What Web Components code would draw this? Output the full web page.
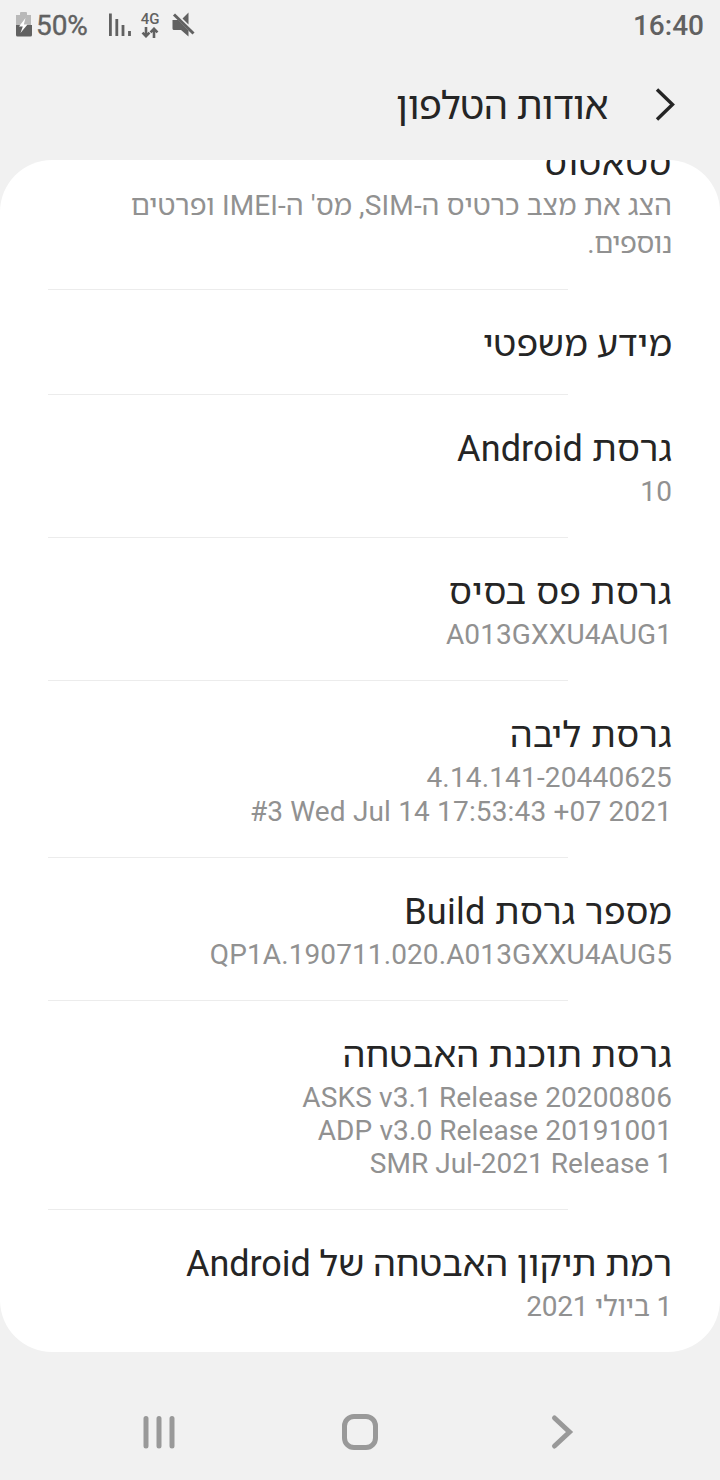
<!DOCTYPE html>
<html lang="he">
<head>
<meta charset="utf-8">
<title>אודות הטלפון</title>
<style>
html, body {
    margin: 0;
    height: 1480px;
    overflow: hidden;
    background: #f1f1f1;
    font-family: Roboto, "Noto Sans Hebrew", "Open Sans", "Noto Sans", sans-serif;
}
</style>
</head>
<body>
<phone-screen>
    <status-bar slot="top" battery="50%" network="4G" time="16:40"></status-bar>
    <page-header slot="top">אודות הטלפון</page-header>
    <settings-card>
        <settings-item class="first" tall heading="סטאטוס" style="--track:.5px">
            <summary-line style="--sub-track:.15px">הצג את מצב כרטיס ה-SIM, מס' ה-IMEI ופרטים</summary-line>
            <summary-line style="--sub-track:-.35px">נוספים.</summary-line>
        </settings-item>
        <settings-item heading="מידע משפטי"></settings-item>
        <settings-item heading="גרסת Android" style="--track:.1px">
            <summary-line>10</summary-line>
        </settings-item>
        <settings-item heading="גרסת פס בסיס" style="--track:.42px">
            <summary-line ltr>A013GXXU4AUG1</summary-line>
        </settings-item>
        <settings-item heading="גרסת ליבה" style="--track:.35px;--line:34px;--end:28px">
            <summary-line ltr style="--sub-track:.16px">4.14.141-20440625</summary-line>
            <summary-line ltr style="--sub-track:.16px">#3 Wed Jul 14 17:53:43 +07 2021</summary-line>
        </settings-item>
        <settings-item heading="מספר גרסת Build" style="--track:.27px">
            <summary-line ltr style="--sub-track:.1px">QP1A.190711.020.A013GXXU4AUG5</summary-line>
        </settings-item>
        <settings-item heading="גרסת תוכנת האבטחה" style="--track:.25px">
            <summary-line ltr>ASKS v3.1 Release 20200806</summary-line>
            <summary-line ltr style="--sub-track:.1px">ADP v3.0 Release 20191001</summary-line>
            <summary-line ltr style="--sub-track:.03px">SMR Jul-2021 Release 1</summary-line>
        </settings-item>
        <settings-item heading="רמת תיקון האבטחה של Android" style="--track:-.08px">
            <summary-line style="--sub-track:-.2px">1 ביולי 2021</summary-line>
        </settings-item>
    </settings-card>
    <nav-bar slot="bottom"></nav-bar>
</phone-screen>

<script>
class PhoneScreen extends HTMLElement {
    constructor() {
        super();
        this.attachShadow({mode: "open"}).innerHTML = `
<style>
:host{
    display: grid;
    grid-template-rows: 160px 1192px 128px;
    width: 720px;
    height: 1480px;
}
.top{
    display: flex;
    flex-direction: column;
}
</style>
<div class="top"><slot name="top"></slot></div>
<slot></slot>
<slot name="bottom"></slot>`;
    }
}

class StatusBar extends HTMLElement {
    constructor() {
        super();
        this.attachShadow({mode: "open"}).innerHTML = `
<style>
:host{
    display: flex;
    align-items: center;
    box-sizing: border-box;
    height: 50px;
    padding: 0 16px 0 15px;
    color: #616161;
    font-size: 28px;
    font-weight: 500;
    line-height: 48px;
}
svg{
    display: block;
}
.battery-icon{
    margin-right: 4px;
}
.battery, .time{
    padding-top: 2px;
}
.battery{
    width: 52px;
    font-weight: 400;
    letter-spacing: -.1px;
    -webkit-text-stroke: .4px #616161;
}
.signal{
    margin: 0 9px 0 20px;
}
.network{
    display: flex;
    flex-direction: column;
    align-items: center;
    gap: 1px;
    width: 20px;
    margin-right: 11px;
    font-size: 15px;
    line-height: 13px;
}
.time{
    margin-left: auto;
}
</style>
<svg class="battery-icon" width="17" height="26" viewBox="0 0 17 26">
    <path d="M1 3h4V1q0-1 1-1h5q1 0 1 1v2h4v12H1z" fill="#b9b9b9"/>
    <path d="M1 13h16v10q0 1.500-1.500 1.500h-13Q1 24.500 1 23z" fill="#616161"/>
    <path d="M10.500 6L4 14.500h3.800L5.500 21l7-8.500H8.800z" fill="#fff"/>
</svg>
<span class="battery"></span>
<svg class="signal" width="23" height="24" viewBox="0 0 23 24" stroke="#616161" stroke-width="2.800">
    <path d="M2.400 .5v22.500M8.800 6v17M15 12v11M21.500 18v5"/>
</svg>
<span class="network"><span class="type"></span>
<svg width="18" height="11" viewBox="0 0 18 11" fill="none" stroke="#616161" stroke-width="2.600">
    <path d="M5 0v9M1.500 5.700L5 9.200l3.500-3.500M13 11V2M9.500 5.300L13 1.800l3.500 3.500"/>
</svg></span>
<svg width="24" height="26" viewBox="0 0 24 26">
    <path d="M1.500 8h5.500l10.500 10.500V24.500l-7.500-6.500H3q-1.500 0-1.500-1.500zM11.500 6.500l6-6v12z" fill="#616161"/>
    <path d="M3 2.500l19.500 19" stroke="#616161" stroke-width="3"/>
</svg>
<span class="time"></span>`;
        this.shadowRoot.querySelector(".battery").textContent = this.getAttribute("battery");
        this.shadowRoot.querySelector(".type").textContent = this.getAttribute("network");
        this.shadowRoot.querySelector(".time").textContent = this.getAttribute("time");
    }
}

class PageHeader extends HTMLElement {
    constructor() {
        super();
        this.attachShadow({mode: "open"}).innerHTML = `
<style>
:host{
    display: flex;
    direction: rtl;
    align-items: center;
    gap: 47px;
    height: 110px;
    padding-right: 43px;
    color: #252525;
    font-size: 38px;
    letter-spacing: -.4px;
}
svg{
    display: block;
}
span{
    padding-bottom: 2px;
}
</style>
<svg width="22" height="34" viewBox="0 0 22 34" fill="none" stroke="#252525" stroke-width="3.400"><path d="M2 1.500L17.500 16.500 2 31.500"/></svg>
<span><slot></slot></span>`;
    }
}

class SettingsCard extends HTMLElement {
    constructor() {
        super();
        this.attachShadow({mode: "open"}).innerHTML = `
<style>
:host{
    display: flex;
    flex-direction: column;
    direction: rtl;
    overflow: hidden;
    border-radius: 52px;
    background: #fff;
}
/* the list is scrolled, its first row starts above the card */
::slotted(.first){
    margin-top: -51px;
}
</style>
<slot></slot>`;
    }
}

class SettingsItem extends HTMLElement {
    constructor() {
        super();
        this.attachShadow({mode: "open"}).innerHTML = `
<style>
:host{
    display: block;
    flex: none;
    padding: 33px 48px 0;
    color: #252525;
}
:host([tall]){
    --line: 38px;
    --gap: 3px;
    --end: 26px;
}
.heading{
    font-size: 36px;
    line-height: 42px;
    letter-spacing: var(--track, 0);
    white-space: nowrap;
}
.summary{
    margin-top: var(--gap, 5px);
    line-height: var(--line, 33px);
}
.summary.empty{
    margin: 0;
}
.divider{
    height: 1px;
    margin-top: var(--end, 29px);
    margin-right: 104px;
    background: #ececec;
}
:host(:last-child) .divider{
    background: none;
}
</style>
<div class="heading"></div>
<div class="summary"><slot></slot></div>
<div class="divider"></div>`;
        this.shadowRoot.querySelector(".heading").textContent = this.getAttribute("heading");
        if (!this.children.length) this.shadowRoot.querySelector(".summary").classList.add("empty");
    }
}

class SummaryLine extends HTMLElement {
    constructor() {
        super();
        this.attachShadow({mode: "open"}).innerHTML = `
<style>
:host{
    display: block;
    height: var(--line, 33px);
    color: #919191;
    font-size: 28px;
    letter-spacing: var(--sub-track, .12px);
    white-space: nowrap;
}
:host([ltr]){
    direction: ltr;
    text-align: right;
}
</style>
<slot></slot>`;
    }
}

class NavBar extends HTMLElement {
    constructor() {
        super();
        this.attachShadow({mode: "open"}).innerHTML = `
<style>
:host{
    display: grid;
    grid-template-columns: repeat(3, 201px);
    justify-content: center;
    justify-items: center;
    align-items: center;
    padding-top: 32px;
    height: 96px;
}
svg{
    display: block;
    fill: none;
    stroke: #999;
    stroke-width: 5;
    stroke-linecap: round;
}
</style>
<svg width="40" height="40" viewBox="0 0 40 40"><path d="M7 6.500v27.500M20 6.500v27.500M33 6.500v27.500"/></svg>
<svg width="40" height="40" viewBox="0 0 40 40"><rect x="4.500" y="4.500" width="31" height="31" rx="9.500"/></svg>
<svg width="40" height="40" viewBox="0 0 40 40"><path d="M13.500 6l15 14-15 14"/></svg>`;
    }
}

customElements.define("phone-screen", PhoneScreen);
customElements.define("status-bar", StatusBar);
customElements.define("page-header", PageHeader);
customElements.define("settings-card", SettingsCard);
customElements.define("settings-item", SettingsItem);
customElements.define("summary-line", SummaryLine);
customElements.define("nav-bar", NavBar);
</script>
</body>
</html>
